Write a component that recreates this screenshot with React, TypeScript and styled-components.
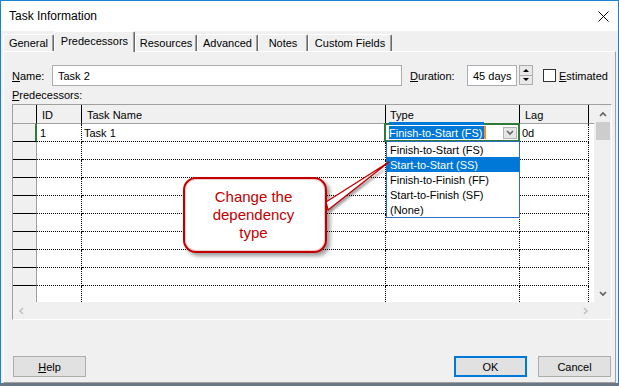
import React from "react";
import styled, { createGlobalStyle, css } from "styled-components";

const GlobalStyle = createGlobalStyle`
  html, body { margin: 0; padding: 0; background: #fff; }
  body {
    font-family: "Liberation Sans", Arial, sans-serif;
    font-size: 11px;
    color: #000;
  }
  * { box-sizing: border-box; }
`;

const GREEN = "#2f7a34";
const BLUE = "#0078d7";
const COLS = "24px 45px 304px 134px 69px 5px";

const Window = styled.div`
  position: relative;
  width: 619px;
  height: 386px;
  border: 1px solid #1883d7;
  border-bottom: 3px solid #6a7785;
  background: #f0f0f0;
  display: flex;
  flex-direction: column;
  overflow: hidden;
`;

const TitleBar = styled.div`
  flex: none;
  height: 30px;
  background: #fff;
  display: flex;
  align-items: center;
  justify-content: space-between;
  padding: 0 9px 0 8px;
  font-size: 12px;
`;

const TabStrip = styled.div`
  flex: none;
  height: 20px;
  display: flex;
  align-items: flex-end;
  padding: 0 2px;
  position: relative;
  z-index: 2;
`;

const Tab = styled.div<{ $w: number; $active?: boolean }>`
  width: ${(p) => p.$w}px;
  height: ${(p) => (p.$active ? 21 : 17)}px;
  margin-bottom: ${(p) => (p.$active ? -1 : 0)}px;
  padding-bottom: ${(p) => (p.$active ? 2 : 0)}px;
  background: #f0f0f0;
  border-top: 1px solid #fff;
  border-left: 1px solid #fff;
  border-right: 1px solid #696969;
  box-shadow: inset -1px 0 0 #a0a0a0;
  border-radius: 2px 2px 0 0;
  display: flex;
  align-items: center;
  justify-content: center;
  white-space: nowrap;
`;

const Panel = styled.div`
  flex: 1;
  margin: 0 2px;
  border-top: 1px solid #fff;
  border-left: 1px solid #fff;
  border-right: 1px solid #a0a0a0;
  border-bottom: 1px solid #a0a0a0;
  padding: 13px 3px 5px 8px;
  display: flex;
  flex-direction: column;
`;

const FieldRow = styled.div`
  flex: none;
  display: flex;
  align-items: center;
  height: 21px;
`;

const FieldLabel = styled.div<{ $w: number; $ml?: number }>`
  width: ${(p) => p.$w}px;
  margin-left: ${(p) => p.$ml ?? 0}px;
  white-space: nowrap;
`;

const Key = styled.span`
  text-decoration: underline;
`;

const TextBox = styled.div<{ $w: number }>`
  width: ${(p) => p.$w}px;
  height: 21px;
  border: 1px solid #abadb3;
  background: #fff;
  padding-left: 5px;
  display: flex;
  align-items: center;
  white-space: nowrap;
`;

const Spinner = styled.div`
  margin-left: 2px;
  width: 14px;
  height: 20px;
  align-self: flex-start;
  display: flex;
  flex-direction: column;
  border: 1px solid #adadad;
  background: #e9e9e9;
`;

const SpinHalf = styled.div<{ $top?: boolean }>`
  flex: 1;
  display: flex;
  align-items: center;
  justify-content: center;
  ${(p) => p.$top && css`border-bottom: 1px solid #adadad;`}
`;

const CheckBox = styled.div`
  margin-left: 10px;
  width: 13px;
  height: 13px;
  border: 1px solid #333;
  background: #fff;
`;

const CheckLabel = styled.div`
  margin-left: 3px;
  white-space: nowrap;
`;

const SectionLabel = styled.div`
  flex: none;
  height: 18px;
  line-height: 18px;
`;

const Grid = styled.div`
  flex: none;
  width: 600px;
  height: 216px;
  border: 1px solid;
  border-color: #a0a0a0 #fff #fff #a0a0a0;
  background: #f0f0f0;
  display: flex;
  flex-direction: column;
`;

const GridBody = styled.div`
  height: 197px;
  display: flex;
`;

const Table = styled.div`
  width: 581px;
  overflow: visible;
  display: flex;
  flex-direction: column;
  height: 197px;
  clip-path: inset(0 -200px 0 0);
`;

const HeaderRow = styled.div`
  flex: none;
  display: grid;
  grid-template-columns: ${COLS};
  height: 19px;
`;

const HeaderCell = styled.div<{ $pl?: number; $filler?: boolean }>`
  background: #f0f0f0;
  border-bottom: 1px solid #a0a0a0;
  border-right: ${(p) => (p.$filler ? "none" : "1px solid #000")};
  padding: 2px 0 0 ${(p) => p.$pl ?? 0}px;
  display: flex;
  align-items: center;
  white-space: nowrap;
`;

const DataRow = styled.div`
  flex: none;
  display: grid;
  grid-template-columns: ${COLS};
  height: 18px;
`;

const RowSelector = styled.div<{ $active?: boolean }>`
  background: #f0f0f0;
  border-bottom: 1px solid #000;
  border-right: 1px solid ${(p) => (p.$active ? GREEN : "#a0a0a0")};
  ${(p) => p.$active && css`box-shadow: inset -1px 0 0 ${GREEN};`}
`;

const Cell = styled.div<{ $pl?: number }>`
  position: relative;
  background: #fff;
  border-right: 1px dotted #000;
  border-bottom: 1px dotted #000;
  padding-left: ${(p) => p.$pl ?? 0}px;
  display: flex;
  align-items: center;
  white-space: nowrap;
`;

const FillerCell = styled.div`
  background: #fff;
`;

const Editor = styled.div`
  position: absolute;
  top: -1px;
  left: -2px;
  right: -1px;
  bottom: -1px;
  border: 2px solid ${GREEN};
  background: #fff;
  z-index: 3;
  display: flex;
  align-items: center;
  justify-content: space-between;
  padding: 0 1px 0 3px;
`;

const EditorBar = styled.div`
  position: absolute;
  top: -3px;
  left: 3px;
  width: 95px;
  height: 3px;
  background: ${BLUE};
`;

const SelText = styled.span`
  display: inline-flex;
  align-items: center;
  height: 13px;
  background: ${BLUE};
  color: #fff;
  border-right: 2px solid #ff8c1a;
  padding-right: 1px;
`;

const DropButton = styled.div`
  width: 14px;
  height: 12px;
  border: 1px solid #b4b4b4;
  background: #e6e6e6;
  display: flex;
  align-items: center;
  justify-content: center;
`;

const DropList = styled.div`
  position: absolute;
  top: 17px;
  left: 0;
  width: 134px;
  border: 1px solid #2c6fc4;
  background: #fff;
  z-index: 5;
  display: flex;
  flex-direction: column;
`;

const DropItem = styled.div<{ $sel?: boolean }>`
  height: 15px;
  padding-left: 3px;
  display: flex;
  align-items: center;
  white-space: nowrap;
  background: ${(p) => (p.$sel ? BLUE : "#fff")};
  color: ${(p) => (p.$sel ? "#fff" : "#000")};
`;

const VScroll = styled.div`
  width: 17px;
  display: flex;
  flex-direction: column;
  background: #f0f0f0;
`;

const ScrollBtn = styled.div<{ $w?: number }>`
  flex: none;
  width: ${(p) => p.$w ?? 17}px;
  height: 17px;
  display: flex;
  align-items: center;
  justify-content: center;
`;

const Thumb = styled.div`
  flex: none;
  height: 18px;
  margin: 0 1px 0 2px;
  background: #cdcdcd;
`;

const Spacer = styled.div`
  flex: 1;
`;

const HScroll = styled.div`
  height: 17px;
  display: flex;
  background: #f0f0f0;
`;

const ButtonRow = styled.div`
  margin-top: auto;
  display: flex;
  align-items: center;
  height: 21px;
`;

const DlgButton = styled.div<{ $default?: boolean; $ml?: number; $mr?: number }>`
  width: 73px;
  height: 21px;
  margin-left: ${(p) => (p.$ml === undefined ? "0px" : p.$ml < 0 ? "auto" : `${p.$ml}px`)};
  margin-right: ${(p) => p.$mr ?? 0}px;
  background: #e1e1e1;
  border: ${(p) => (p.$default ? `2px solid ${BLUE}` : "1px solid #adadad")};
  display: flex;
  align-items: center;
  justify-content: center;
`;

const Callout = styled.div`
  position: absolute;
  left: 182px;
  top: 176px;
  width: 144px;
  height: 76px;
  border: 2px solid #c00000;
  border-radius: 13px;
  background: #fff;
  box-shadow: inset 0 0 0 1px #f2cccc, 3px 3px 4px rgba(0, 0, 0, 0.4);
  z-index: 6;
  display: flex;
  align-items: center;
  justify-content: center;
  padding-right: 3px;
  text-align: center;
  color: #c00000;
  font-family: "Liberation Sans", Arial, sans-serif;
  font-size: 15px;
  line-height: 18px;
`;

const Pointer = styled.svg`
  position: absolute;
  left: 319px;
  top: 155px;
  z-index: 7;
  overflow: visible;
`;

const Chevron = ({ dir, color }: { dir: "up" | "down" | "left" | "right"; color: string }) => {
  const pts: Record<string, string> = {
    up: "1,5 4,2 7,5",
    down: "1,1 4,4 7,1",
    left: "5,1 2,4 5,7",
    right: "2,1 5,4 2,7",
  };
  const horiz = dir === "left" || dir === "right";
  return (
    <svg width={horiz ? 7 : 8} height={horiz ? 8 : 6} viewBox={horiz ? "0 0 7 8" : "0 0 8 6"}>
      <polyline points={pts[dir]} fill="none" stroke={color} strokeWidth={1.6} />
    </svg>
  );
};

const tabs = [
  { label: "General", w: 51 },
  { label: "Predecessors", w: 81, active: true },
  { label: "Resources", w: 62 },
  { label: "Advanced", w: 61 },
  { label: "Notes", w: 50 },
  { label: "Custom Fields", w: 84 },
];

const options = [
  "Finish-to-Start (FS)",
  "Start-to-Start (SS)",
  "Finish-to-Finish (FF)",
  "Start-to-Finish (SF)",
  "(None)",
];

export default function App() {
  const emptyRows = Array.from({ length: 9 }, (_, i) => i);
  return (
    <>
      <GlobalStyle />
      <Window>
        <TitleBar>
          <span>Task Information</span>
          <svg width="11" height="11" viewBox="0 0 11 11">
            <path d="M0.5 0.5 L10.5 10.5 M10.5 0.5 L0.5 10.5" stroke="#000" strokeWidth="1" fill="none" />
          </svg>
        </TitleBar>
        <TabStrip>
          {tabs.map((t) => (
            <Tab key={t.label} $w={t.w} $active={t.active}>
              {t.label}
            </Tab>
          ))}
        </TabStrip>
        <Panel>
          <FieldRow>
            <FieldLabel $w={40}>
              <Key>N</Key>ame:
            </FieldLabel>
            <TextBox $w={350}>Task 2</TextBox>
            <FieldLabel $w={57} $ml={8}>
              <Key>D</Key>uration:
            </FieldLabel>
            <TextBox $w={50}>45 days</TextBox>
            <Spinner>
              <SpinHalf $top>
                <svg width="6" height="3" viewBox="0 0 6 3">
                  <polygon points="0,3 3,0 6,3" fill="#000" />
                </svg>
              </SpinHalf>
              <SpinHalf>
                <svg width="6" height="3" viewBox="0 0 6 3">
                  <polygon points="0,0 6,0 3,3" fill="#000" />
                </svg>
              </SpinHalf>
            </Spinner>
            <CheckBox />
            <CheckLabel>
              <Key>E</Key>stimated
            </CheckLabel>
          </FieldRow>
          <SectionLabel>
            <Key>P</Key>redecessors:
          </SectionLabel>
          <Grid>
            <GridBody>
              <Table>
                <HeaderRow>
                  <HeaderCell />
                  <HeaderCell $pl={5}>ID</HeaderCell>
                  <HeaderCell $pl={5}>Task Name</HeaderCell>
                  <HeaderCell $pl={4}>Type</HeaderCell>
                  <HeaderCell $pl={5}>Lag</HeaderCell>
                  <HeaderCell $filler />
                </HeaderRow>
                <DataRow>
                  <RowSelector $active />
                  <Cell $pl={3}>1</Cell>
                  <Cell $pl={2}>Task 1</Cell>
                  <Cell>
                    <Editor>
                      <EditorBar />
                      <SelText>Finish-to-Start (FS)</SelText>
                      <DropButton>
                        <Chevron dir="down" color="#6a6a6a" />
                      </DropButton>
                    </Editor>
                    <DropList>
                      {options.map((o, i) => (
                        <DropItem key={o} $sel={i === 1}>
                          {o}
                        </DropItem>
                      ))}
                    </DropList>
                  </Cell>
                  <Cell $pl={2}>0d</Cell>
                  <FillerCell />
                </DataRow>
                {emptyRows.map((r) => (
                  <DataRow key={r}>
                    <RowSelector />
                    <Cell />
                    <Cell />
                    <Cell />
                    <Cell />
                    <FillerCell />
                  </DataRow>
                ))}
              </Table>
              <VScroll>
                <ScrollBtn>
                  <Chevron dir="up" color="#606060" />
                </ScrollBtn>
                <Thumb />
                <Spacer />
                <ScrollBtn>
                  <Chevron dir="down" color="#606060" />
                </ScrollBtn>
              </VScroll>
            </GridBody>
            <HScroll>
              <ScrollBtn>
                <Chevron dir="left" color="#c2c2c2" />
              </ScrollBtn>
              <Spacer />
              <ScrollBtn>
                <Chevron dir="right" color="#c2c2c2" />
              </ScrollBtn>
              <ScrollBtn />
            </HScroll>
          </Grid>
          <ButtonRow>
            <DlgButton $ml={1}>
              <span>
                <Key>H</Key>elp
              </span>
            </DlgButton>
            <DlgButton $default $ml={-1}>
              OK
            </DlgButton>
            <DlgButton $ml={11} $mr={1}>
              Cancel
            </DlgButton>
          </ButtonRow>
        </Panel>
        <Callout>
          Change the
          <br />
          dependency
          <br />
          type
        </Callout>
        <Pointer width="75" height="60" viewBox="0 0 75 60">
          <defs>
            <filter id="ptrShadow" x="-20%" y="-20%" width="140%" height="140%">
              <feGaussianBlur stdDeviation="1.2" />
            </filter>
          </defs>
          <polygon points="69,6 6,46 8,54" transform="translate(2,3)" fill="rgba(0,0,0,0.35)" filter="url(#ptrShadow)" />
          <polygon points="69,6 6,46 8,54" fill="#fff" stroke="#c00000" strokeWidth="1.4" strokeLinejoin="round" />
        </Pointer>
      </Window>
    </>
  );
}
